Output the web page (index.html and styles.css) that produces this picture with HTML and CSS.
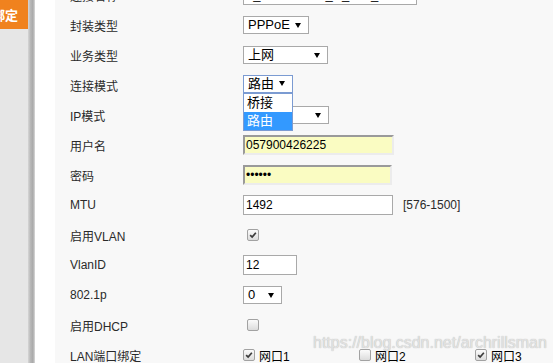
FILE: index.html
```html
<!DOCTYPE html>
<html lang="zh-CN">
<head>
    <meta charset="UTF-8">
    <title>WAN配置</title>
    <link rel="stylesheet" href="styles.css">
</head>
<body>
<aside class="sidebar">
    <div class="side-btn">绑定</div>
</aside>
<div class="edge"></div>
<div class="gutter"></div>
<main class="content">
    <div class="form">
        <div class="row">
            <span class="label">连接名称</span>
            <input class="field name" type="text" value="2_INTERNET_R_VID_12">
        </div>
        <div class="row">
            <span class="label">封装类型</span>
            <div class="select w66"><span>PPPoE</span><i class="arrow"></i></div>
        </div>
        <div class="row">
            <span class="label">业务类型</span>
            <div class="select w85"><span>上网</span><i class="arrow"></i></div>
        </div>
        <div class="row">
            <span class="label">连接模式</span>
            <div class="select w50 open">
                <span>路由</span><i class="arrow"></i>
                <ul class="options">
                    <li>桥接</li>
                    <li class="active">路由</li>
                </ul>
            </div>
        </div>
        <div class="row">
            <span class="label">IP模式</span>
            <div class="select w86"><span></span><i class="arrow"></i></div>
        </div>
        <div class="row">
            <span class="label">用户名</span>
            <input class="field filled w151" type="text" value="057900426225">
        </div>
        <div class="row">
            <span class="label">密码</span>
            <input class="field filled w149" type="password" value="123456">
        </div>
        <div class="row">
            <span class="label">MTU</span>
            <input class="field w150" type="text" value="1492">
            <span class="hint">[576-1500]</span>
        </div>
        <div class="row">
            <span class="label">启用VLAN</span>
            <span class="check on"><svg viewBox="0 0 13 13"><path d="M2.8 6.6l2.6 2.6 4.8-5.6" /></svg></span>
        </div>
        <div class="row">
            <span class="label">VlanID</span>
            <input class="field w54" type="text" value="12">
        </div>
        <div class="row">
            <span class="label">802.1p</span>
            <div class="select w39"><span>0</span><i class="arrow"></i></div>
        </div>
        <div class="row">
            <span class="label">启用DHCP</span>
            <span class="check"></span>
        </div>
        <div class="row">
            <span class="label">LAN端口绑定</span>
            <div class="ports">
                <label class="port"><span class="check on"><svg viewBox="0 0 13 13"><path d="M2.8 6.6l2.6 2.6 4.8-5.6" /></svg></span>网口1</label>
                <label class="port"><span class="check"></span>网口2</label>
                <label class="port"><span class="check on"><svg viewBox="0 0 13 13"><path d="M2.8 6.6l2.6 2.6 4.8-5.6" /></svg></span>网口3</label>
            </div>
        </div>
    </div>
</main>
<div class="watermark">https://blog.csdn.net/archrillsman</div>
</body>
</html>
```

FILE: styles.css
```css
* {
    margin: 0;
    padding: 0;
    box-sizing: border-box;
    font-family: "Liberation Sans", "Noto Sans CJK SC", sans-serif;
}

body {
    display: flex;
    height: 100vh;
    overflow: hidden;
    position: relative;
    font-size: 12px;
    color: #333;
    background: #f8f8f8;
}

.sidebar {
    width: 28px;
    flex-shrink: 0;
    background: #e6e6e6;
    overflow: hidden;
}

.side-btn {
    height: 29px;
    background: #f0821e;
    color: #fff;
    font-size: 13px;
    font-weight: bold;
    display: flex;
    align-items: center;
    justify-content: flex-end;
    padding-right: 10px;
    white-space: nowrap;
    overflow: hidden;
}

.edge {
    width: 7px;
    flex-shrink: 0;
    background: linear-gradient(to right, #d6d6d6, #b8b8b8 35%, #a9a9a9 70%, #dadada);
}

.gutter {
    width: 20px;
    flex-shrink: 0;
    background: #fff;
}

.content {
    flex: 1;
    padding-left: 15px;
    background: #f8f8f8;
}

.form {
    margin-top: -20px;
}

.row {
    display: flex;
    align-items: center;
    height: 30px;
}

.label {
    width: 173px;
    flex-shrink: 0;
    color: #2a2a2a;
}

.field {
    height: 20px;
    padding: 0 2px;
    border: 1px solid #a9a9a9;
    background: #fff;
    color: #000;
    font-size: 12px;
    outline: none;
}

.field.name {
    width: 174px;
    font-size: 13px;
    margin-top: -1px;
}

.field.filled {
    padding: 0 1px;
    border-width: 2px;
    border-style: solid;
    border-color: #9a9a9a #ececec #ececec #9a9a9a;
    background: #fafcc2;
}

.w151 { width: 151px; }
.w149 { width: 149px; }
.w150 { width: 150px; }
.w54 { width: 54px; }

.hint {
    margin-left: 10px;
    color: #2a2a2a;
}

.select {
    position: relative;
    height: 18px;
    display: flex;
    align-items: center;
    padding: 0 7px 0 4px;
    border: 1px solid #a9a9a9;
    background: #fff;
    color: #000;
    font-size: 13px;
}

.select span {
    line-height: 16px;
}

.w66 { width: 66px; }
.w85 { width: 85px; }
.w50 { width: 50px; }
.w86 { width: 86px; }
.w39 { width: 39px; }

.arrow {
    margin-left: auto;
    width: 0;
    height: 0;
    border-left: 3px solid transparent;
    border-right: 3px solid transparent;
    border-top: 5px solid #000;
}

.select.open {
    border-color: #7b9bd2;
    margin-top: -3px;
    z-index: 2;
}

.options {
    position: absolute;
    top: 17px;
    left: -1px;
    width: 50px;
    list-style: none;
    border: 1px solid #7b9bd2;
    background: #fff;
}

.options li {
    height: 18px;
    line-height: 18px;
    padding-left: 3px;
    font-size: 13px;
    color: #000;
}

.options li.active {
    background: #3399ff;
    color: #fff;
}

.check {
    width: 12px;
    height: 12px;
    margin-left: 4px;
    border: 1px solid #a2a2a2;
    border-radius: 2px;
    background: linear-gradient(#fbfbfb, #dcdcdc);
    display: flex;
    flex-shrink: 0;
}

.check svg {
    width: 100%;
    height: 100%;
}

.check path {
    fill: none;
    stroke: #3c3c3c;
    stroke-width: 2.2;
}

.ports {
    display: flex;
}

.port {
    width: 116px;
    display: flex;
    align-items: center;
    color: #000;
}

.port .check {
    margin-left: 0;
    margin-right: 4px;
}

.watermark {
    position: absolute;
    left: 313px;
    top: 335px;
    font-size: 16px;
    line-height: 16px;
    color: rgba(232, 232, 232, 0.9);
    text-shadow: 0 0 1px #a8a8a8;
    white-space: nowrap;
}
```
